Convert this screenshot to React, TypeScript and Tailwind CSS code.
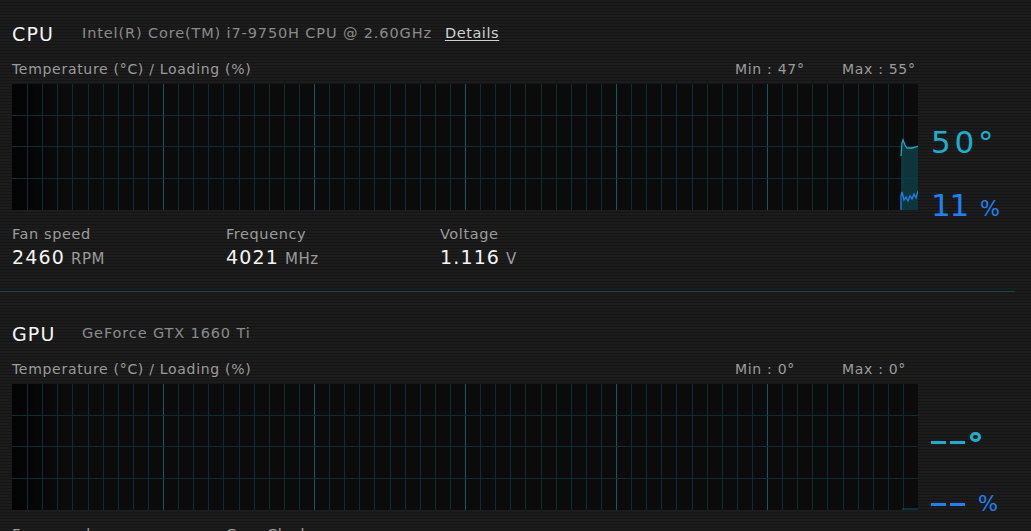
import React from 'react'

type Stat = { label: string; value: string; unit: string }

interface SectionProps {
  title: string
  subtitle: string
  details?: boolean
  min: string
  max: string
  temp: string
  load: string
  stats: Stat[]
  active: boolean
}

const W = 906
const H = 126
const COLS = 60

function Graph({ active }: { active: boolean }) {
  const step = W / COLS
  return (
    <div className="w-[906px] h-[126px] shrink-0 bg-[linear-gradient(to_right,#030303_0%,#0b0b0b_6%,#0b0b0b_100%)]">
      <svg width={W} height={H} viewBox={`0 0 ${W} ${H}`} className="block">
        {Array.from({ length: COLS - 1 }, (_, i) => {
          const x = Math.round((i + 1) * step) + 0.5
          const major = (i + 1) % 10 === 0
          return (
            <line
              key={i}
              x1={x}
              x2={x}
              y1={0}
              y2={H}
              stroke={major ? '#0f5866' : '#0b2f37'}
              strokeWidth={1}
            />
          )
        })}
        {[1, 2, 3].map((r) => (
          <line key={r} x1={0} x2={W} y1={Math.round((r * H) / 4) - 0.5} y2={Math.round((r * H) / 4) - 0.5} stroke="#0c2d34" strokeWidth={1} />
        ))}
        {active ? (
          <>
            <polygon
              points="889,126 889,70 890,59 891,56 893,61 895,64 900,64 904,63 906,62 906,126"
              fill="#0f3d45"
              fillOpacity={0.85}
            />
            <polyline
              points="889,72 890,59 891,56 893,61 895,64 900,64 904,63 906,62"
              fill="none"
              stroke="#1aa8c2"
              strokeWidth={1.3}
            />
            <polyline
              points="889,126 889,112 890,108 892,116 894,113 896,117 898,112 900,115 902,110 904,114 906,107"
              fill="none"
              stroke="#1f82f0"
              strokeWidth={1.3}
            />
          </>
        ) : (
          <line x1={890} x2={906} y1={125} y2={125} stroke="#11596a" strokeWidth={1} />
        )}
      </svg>
    </div>
  )
}

function Section({ title, subtitle, details, min, max, temp, load, stats, active }: SectionProps) {
  return (
    <div className="pl-3">
      {/* Header */}
      <div className="flex items-center h-[22px]">
        <span className="text-[19px] text-[#f4f4f4] tracking-[0.06em] w-[70px]">{title}</span>
        <span className="text-[14.5px] text-[#8b8b8b] tracking-[0.06em]">{subtitle}</span>
        {details && <span className="ml-[13px] text-[14.5px] text-[#d0d0d0] tracking-[0.04em] underline underline-offset-2">Details</span>}
      </div>

      <div className="flex items-center h-[20px] mt-[14px] w-[906px] text-[14px] text-[#9b9b9b] tracking-[0.05em]">
        <span className="flex-1">Temperature (°C) / Loading (%)</span>
        <span className="w-[107px]">Min : {min}</span>
        <span className="w-[76px]">Max : {max}</span>
      </div>

      <div className="flex mt-[5px]">
        <Graph active={active} />
        <div className="relative ml-[13px] w-[90px]">
          {active ? (
            <>
              <div className="absolute left-0 top-[43px] text-[31px] leading-none text-[#19b0cf] tracking-[0.12em]">{temp}</div>
              <div className="absolute left-0 top-[106px] flex items-baseline leading-none text-[#1c82f4]">
                <span className="text-[31px] tracking-[-0.04em]">{load}</span>
                <span className="ml-[12px] text-[21px]">%</span>
              </div>
            </>
          ) : (
            <>
              <div className="absolute left-0 top-[48px] flex items-start leading-none text-[#19b0cf]">
                <span className="mt-[9px] flex gap-[4px]">
                  <span className="w-[15px] h-[3px] bg-[#19b0cf]" />
                  <span className="w-[15px] h-[3px] bg-[#19b0cf]" />
                </span>
                <span className="ml-[5px] w-[11px] h-[10px] rounded-full border-[3px] border-[#19b0cf]" />
              </div>
              <div className="absolute left-0 top-[110px] flex items-start leading-none text-[#1c82f4]">
                <span className="mt-[9px] flex gap-[4px]">
                  <span className="w-[15px] h-[3px] bg-[#1c82f4]" />
                  <span className="w-[15px] h-[3px] bg-[#1c82f4]" />
                </span>
                <span className="ml-[13px] text-[21px]">%</span>
              </div>
            </>
          )}
        </div>
      </div>

      {/* Stats */}
      <div className="flex mt-[15px] h-[44px]">
        {stats.map((s) => (
          <div key={s.label} className="w-[214px] flex flex-col">
            <span className="text-[14.5px] h-[18px] leading-[18px] text-[#9b9b9b] tracking-[0.04em]">{s.label}</span>
            <span className="mt-[4px] h-[20px] leading-[20px] flex items-baseline">
              <span className="text-[19px] text-[#f4f4f4] tracking-[0.06em]">{s.value}</span>
              <span className="ml-[6px] text-[15px] text-[#9b9b9b] tracking-[0.04em]">{s.unit}</span>
            </span>
          </div>
        ))}
      </div>
    </div>
  )
}

export default function App() {
  return (
    <div
      className="w-[1031px] h-[531px] overflow-hidden pt-[23px] bg-[repeating-linear-gradient(to_bottom,#1c1c1c_0px,#1c1c1c_2px,#151515_2px,#151515_3px)]"
      style={{ fontFamily: '"DejaVu Sans", Inter, sans-serif' }}
    >
      <Section
        title="CPU"
        subtitle="Intel(R) Core(TM) i7-9750H CPU @ 2.60GHz"
        details
        min="47°"
        max="55°"
        temp="50°"
        load="11"
        active
        stats={[
          { label: 'Fan speed', value: '2460', unit: 'RPM' },
          { label: 'Frequency', value: '4021', unit: 'MHz' },
          { label: 'Voltage', value: '1.116', unit: 'V' },
        ]}
      />

      <div className="mt-[22px] mr-[16px] h-px bg-[#104653]" />

      <div className="pt-[31px]">
        <Section
          title="GPU"
          subtitle="GeForce GTX 1660 Ti"
          min="0°"
          max="0°"
          temp="--°"
          load="--"
          active={false}
          stats={[
            { label: 'Fan speed', value: '0', unit: 'RPM' },
            { label: 'Core Clock', value: '0', unit: 'MHz' },
          ]}
        />
      </div>
    </div>
  )
}
